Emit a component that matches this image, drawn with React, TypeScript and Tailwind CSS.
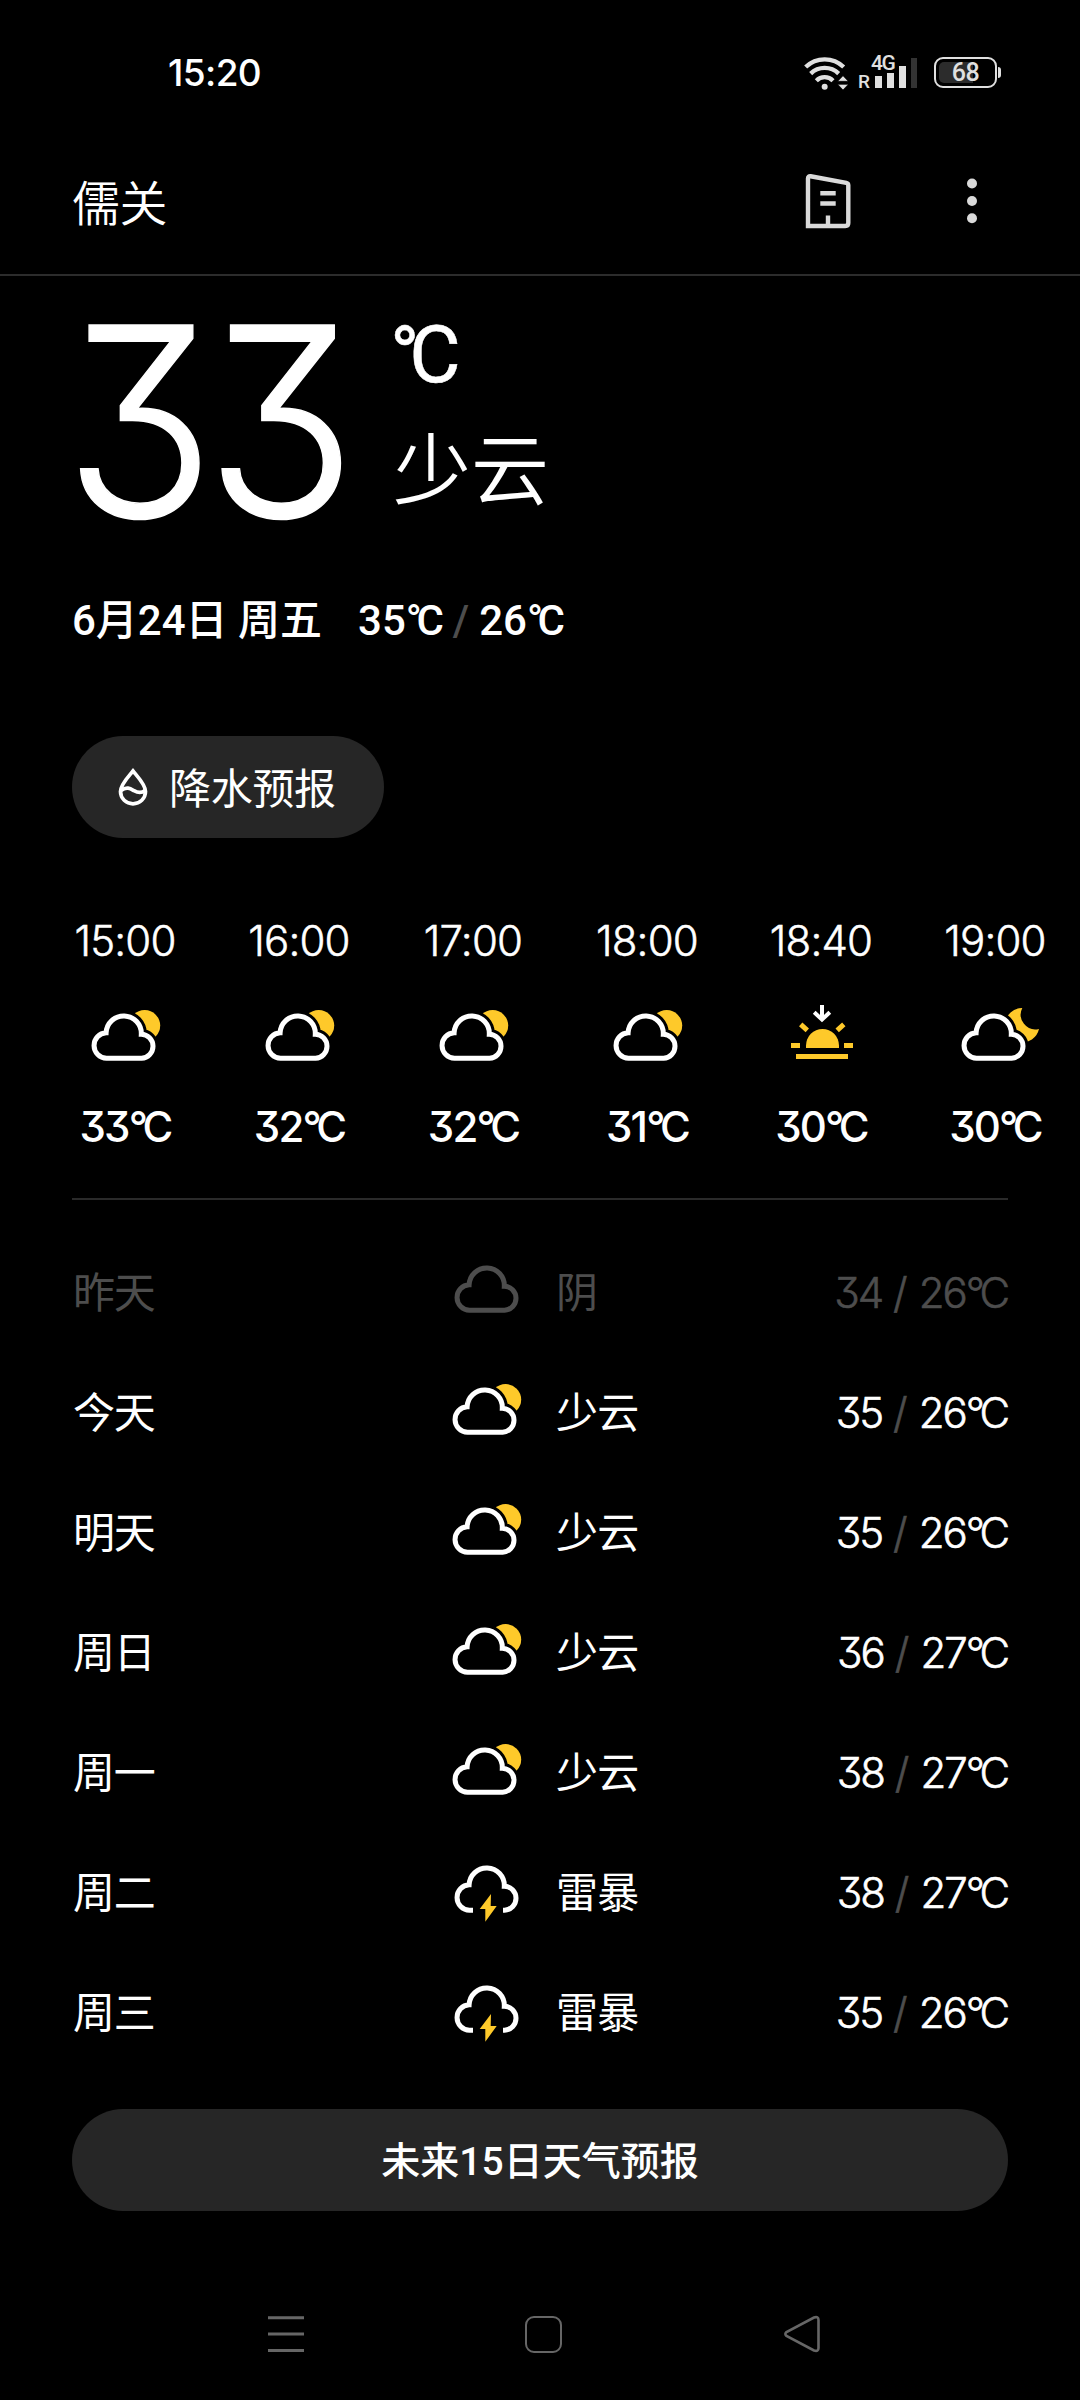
import React from "react";

type Weather = "partly" | "cloudy" | "night" | "sunset" | "thunder";

const YELLOW = "#fec92a";
const CLOUD =
  "M16.5 58.2 A12.71 12.71 0 0 1 16.1 32.8 A17.6 17.6 0 0 1 51.3 34.2 A12.01 12.01 0 0 1 51.6 58.2 Z";
const OPEN_CLOUD =
  "M20 58.2 H16.5 A12.71 12.71 0 0 1 16.1 32.8 A17.6 17.6 0 0 1 51.3 34.2 A12.01 12.01 0 0 1 51.6 58.2 H50";

function WeatherIcon({ kind, color = "#fff" }: { kind: Weather; color?: string }) {
  return (
    <svg className="size-[72px] shrink-0 overflow-visible" viewBox="0 0 72 72" fill="none">
      {kind === "partly" && <circle cx="54.7" cy="25.6" r="15.5" fill={YELLOW} />}
      {kind === "night" && (
        <path d="M62.3 8 A17.2 17.2 0 1 0 79 29 A14.8 14.8 0 0 1 62.3 8 Z" fill={YELLOW} />
      )}
      {(kind === "partly" || kind === "night") && (
        <>
          <path d={CLOUD} fill="#000" stroke="#000" strokeWidth="11" />
          <path d={CLOUD} stroke={color} strokeWidth="5" />
        </>
      )}
      {kind === "cloudy" && (
        <path d={CLOUD} transform="translate(2 -2)" stroke={color} strokeWidth="5" />
      )}
      {kind === "thunder" && (
        <>
          <path d={OPEN_CLOUD} transform="translate(2 -2)" stroke={color} strokeWidth="5" />
          <path d="M40 40 L28.7 55 H34.3 V67.7 L45.7 52 H39.7 Z" fill={YELLOW} />
        </>
      )}
      {kind === "sunset" && (
        <>
          <path d="M20 48 V45.5 A16.5 16.5 0 0 1 53 45.5 V48 Z" fill={YELLOW} />
          <path
            d="M10 56.5 H62 M5 45.5 H14 M58 45.5 H67 M14.7 24.3 L21.3 30.3 M57.8 24.3 L51.2 30.3"
            stroke={YELLOW}
            strokeWidth="5"
          />
          <path d="M36 5 V20 M28.2 12.3 L36 19.6 L43.8 12.3" stroke="#fff" strokeWidth="4" />
        </>
      )}
    </svg>
  );
}

function Celsius() {
  return (
    <>
      <span className="tracking-[-0.13em]">°</span>C
    </>
  );
}

const hours: { time: string; kind: Weather; temp: number }[] = [
  { time: "15:00", kind: "partly", temp: 33 },
  { time: "16:00", kind: "partly", temp: 32 },
  { time: "17:00", kind: "partly", temp: 32 },
  { time: "18:00", kind: "partly", temp: 31 },
  { time: "18:40", kind: "sunset", temp: 30 },
  { time: "19:00", kind: "night", temp: 30 },
];

const days: { day: string; kind: Weather; text: string; high: number; low: number; past?: boolean }[] = [
  { day: "昨天", kind: "cloudy", text: "阴", high: 34, low: 26, past: true },
  { day: "今天", kind: "partly", text: "少云", high: 35, low: 26 },
  { day: "明天", kind: "partly", text: "少云", high: 35, low: 26 },
  { day: "周日", kind: "partly", text: "少云", high: 36, low: 27 },
  { day: "周一", kind: "partly", text: "少云", high: 38, low: 27 },
  { day: "周二", kind: "thunder", text: "雷暴", high: 38, low: 27 },
  { day: "周三", kind: "thunder", text: "雷暴", high: 35, low: 26 },
];

function StatusBar() {
  return (
    <div className="flex h-[144px] items-center pl-[168px] pr-[79px] text-[#e0e0e0]">
      <span className="mt-[2px] text-[37px] font-medium leading-[46px] tracking-[-0.6px] text-white">15:20</span>
      <div className="ml-auto flex h-[60px] items-start">
        <svg className="mt-[12px] h-[36px] w-[44px]" viewBox="75 36 132 108" fill="none">
          <path
            d="M80 75 A82 82 0 0 1 194 75 M95 95 A60 60 0 0 1 179 95 M112 116 A35 35 0 0 1 162 116"
            stroke="currentColor"
            strokeWidth="13"
          />
          <circle cx="137" cy="134" r="9" fill="currentColor" />
          <path d="M176 118 L192 101 L208 118 Z M176 127 L192 144 L208 127 Z" fill="currentColor" stroke="#000" strokeWidth="2" />
        </svg>
        <div className="relative ml-[10px] h-[60px] w-[63px]">
          <span className="absolute left-0 top-[28px] font-['Roboto',sans-serif] text-[19px] font-medium leading-[24px]">
            R
          </span>
          <span className="absolute left-[13px] top-[8px] font-['Roboto',sans-serif] text-[21px] font-medium leading-[26px] tracking-[-1.4px]">
            4G
          </span>
          <div className="absolute bottom-[14px] left-[17px] flex items-end gap-[5px]">
            <i className="h-[12px] w-[7px] bg-[#e0e0e0]" />
            <i className="h-[15px] w-[7px] bg-[#e0e0e0]" />
            <i className="h-[22px] w-[7px] bg-[#e0e0e0]" />
            <i className="h-[30px] w-[6px] bg-[#333]" />
          </div>
        </div>
        <div className="ml-[13px] mt-[15px] flex items-center gap-px">
          <div className="relative flex h-[31px] w-[63px] items-center justify-center rounded-[9px] border-2 border-[#e0e0e0]">
            <i className="absolute inset-y-[3px] left-[3px] w-[34px] rounded-l-[5px] bg-[#2c2c2c]" />
            <span className="relative font-['Roboto',sans-serif] text-[25px] font-medium leading-[27px] tracking-[-0.5px]">68</span>
          </div>
          <i className="h-[11px] w-[3px] rounded-r-sm bg-[#e0e0e0]" />
        </div>
      </div>
    </div>
  );
}

function Header() {
  return (
    <header className="flex h-[132px] items-start border-b-2 border-[#2c2c2c] pl-[72px] pr-[102px]">
      <h1 className="mt-[30px] text-[48px] font-[350] leading-[60px] tracking-[-0.5px]">儒关</h1>
      <svg className="ml-auto mt-[28px] h-[58px] w-[48px]" viewBox="0 0 48 58" fill="none">
        <path
          d="M4 54 V6.5 Q4 4 6.6 4.3 L42.3 10.8 Q44.3 11.3 44.3 13.3 V51 Q44.3 54 41.3 54 Z M24 54 V43.5 M16.3 21.3 H31.7 M16.3 31.5 H31.7"
          stroke="#dadada"
          strokeWidth="4.4"
        />
      </svg>
      <svg className="ml-[114px] mt-[34px] h-[46px] w-[12px]" viewBox="0 0 12 46" fill="#dadada">
        <circle cx="6" cy="5.5" r="5" />
        <circle cx="6" cy="23" r="5" />
        <circle cx="6" cy="40.3" r="5" />
      </svg>
    </header>
  );
}

function Current() {
  return (
    <section className="h-[460px] pl-[72px]">
      <div className="flex h-[295px] pt-[26px]">
        <div className="w-[318px] shrink-0">
          <div className="-ml-[8px] w-[380px] origin-left scale-x-[0.94] text-[264px] font-light leading-[239px] tracking-[-10px] [-webkit-text-stroke:1.5px_#fff] [font-feature-settings:'cv09']">
            33
          </div>
        </div>
        <div>
          <div className="h-[110px] font-['Roboto',sans-serif] text-[79px] leading-[106px] [-webkit-text-stroke:0.5px_#fff]">
            <Celsius />
          </div>
          <div className="mt-[4px] pl-[3px] text-[78px] font-[350] leading-[110px]">少云</div>
        </div>
      </div>
      <div className="flex pt-[23px] font-['Roboto','Noto_Sans_CJK_SC',sans-serif] text-[42px] font-medium leading-[54px]">
        <span>6月24日 周五</span>
        <span className="ml-[36px]">
          35
          <Celsius />
        </span>
        <span className="ml-[9px] mr-[10px] text-[#4d4d4d]">/</span>
        <span>
          26
          <Celsius />
        </span>
      </div>
    </section>
  );
}

export default function App() {
  return (
    <div className="flex h-[2400px] w-[1080px] flex-col overflow-hidden bg-black font-['Inter','Noto_Sans_CJK_SC',sans-serif] text-white">
      <StatusBar />
      <Header />
      <Current />

      <button className="ml-[72px] flex h-[102px] w-[312px] shrink-0 items-center rounded-full bg-[#262626] pl-[46px]">
        <svg className="h-[38px] w-[30px]" viewBox="0 0 30 38" fill="none" stroke="#fff" strokeWidth="3.7">
          <path d="M15 3 C11 8 2.5 16.5 2.5 23.5 A12.5 12.3 0 0 0 27.5 23.5 C27.5 16.5 19 8 15 3 Z" />
          <path d="M3 22.5 C9 18 13 21 16 22.7 C20 25 24 25 27 22.5" />
        </svg>
        <span className="ml-[21px] mt-[3px] text-[42px] leading-[60px] tracking-[-0.3px]">降水预报</span>
      </button>

      <section className="ml-[39px] flex h-[360px] shrink-0 pt-[72px]">
        {hours.map((h) => (
          <div key={h.time} className="flex w-[174px] shrink-0 flex-col items-center">
            <span className="pr-[2px] pt-px text-[42px] font-light leading-[60px] tracking-[-0.8px] [-webkit-text-stroke:0.5px_#fff]">
              {h.time}
            </span>
            <div className="mt-[29px]">
              <WeatherIcon kind={h.kind} />
            </div>
            <span className="mt-[25px] pr-px text-[42px] font-medium leading-[60px] tracking-[-1.8px] [font-feature-settings:'cv09']">
              {h.temp}
              <Celsius />
            </span>
          </div>
        ))}
      </section>

      <hr className="mx-[72px] border-t-2 border-[#2a2a2a]" />

      <section className="px-[72px] pt-[30px]">
        {days.map((d) => (
          <div
            key={d.day}
            className={
              "flex h-[120px] items-center text-[42px] leading-[60px] " + (d.past ? "text-[#4d4d4d]" : "text-white")
            }
          >
            <span className="mt-[6px] w-[379px] pl-px tracking-[-1.2px]">{d.day}</span>
            <WeatherIcon kind={d.kind} color={d.past ? "#4d4d4d" : "#fff"} />
            <span className="ml-[33px] mt-[6px] tracking-[-0.8px]">{d.text}</span>
            <span className="ml-auto mt-[6px] flex text-[42px] font-light tracking-[-2px] [-webkit-text-stroke:0.6px_currentColor] [font-feature-settings:'cv09']">
              <span>{d.high}</span>
              <span className="ml-[11px] mr-[13px] text-[#4d4d4d]">/</span>
              <span>
                {d.low}
                <Celsius />
              </span>
            </span>
          </div>
        ))}
      </section>

      <button className="mx-[72px] mt-[39px] flex h-[102px] shrink-0 items-center justify-center rounded-full bg-[#262626] pt-[4px] font-['Roboto','Noto_Sans_CJK_SC',sans-serif] text-[39px] font-medium leading-[60px]">
        未来15日天气预报
      </button>

      <nav className="mt-[104px] flex items-center pl-[267px] text-[#666]">
        <svg className="h-[38px] w-[38px]" viewBox="0 0 38 38" stroke="currentColor" strokeWidth="3">
          <path d="M1 2.7 H37 M1 18.9 H37 M1 35.4 H37" />
        </svg>
        <div className="ml-[220px] h-[37px] w-[37px] rounded-[9px] border-[2.5px] border-[#666]" />
        <svg className="ml-[221px] h-[38px] w-[38px]" viewBox="0 0 38 38" fill="none" stroke="currentColor" strokeWidth="2.6">
          <path d="M3.5 17 Q1.2 19 3.5 21 L31 35.5 Q35.5 37 35.5 33 V5 Q35.5 1 31 2.5 Z" />
        </svg>
      </nav>
    </div>
  );
}
